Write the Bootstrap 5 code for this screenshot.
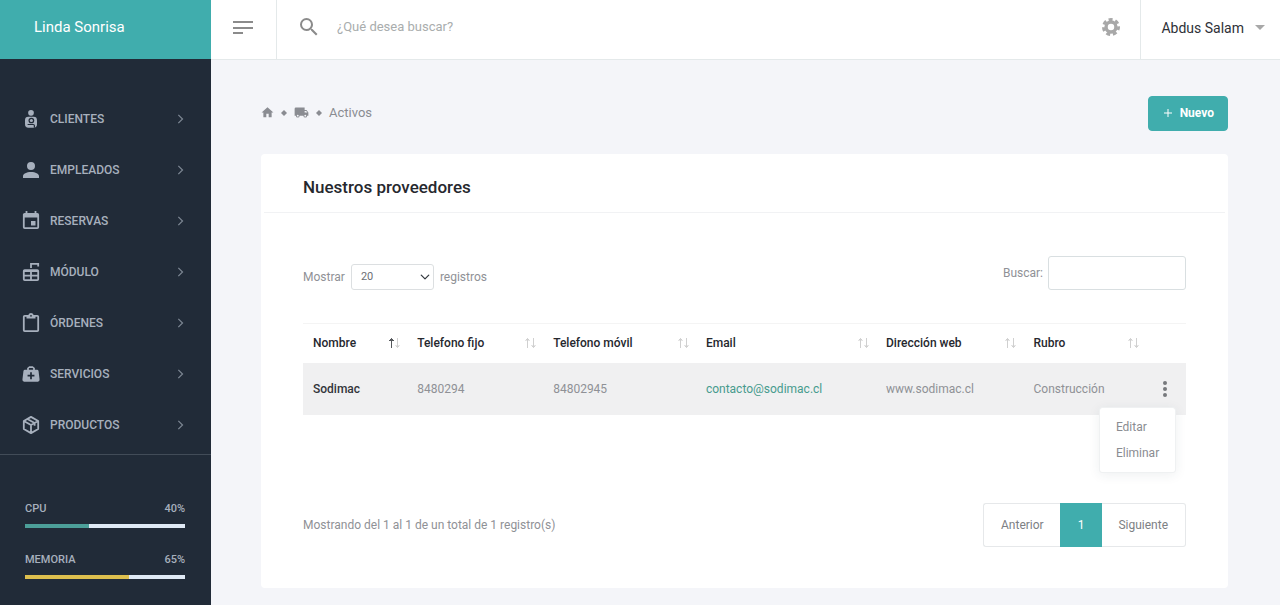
<!DOCTYPE html>
<html lang="es">
<head>
<meta charset="utf-8">
<meta name="viewport" content="width=device-width, initial-scale=1">
<title>Linda Sonrisa - Proveedores</title>
<link href="https://cdn.jsdelivr.net/npm/bootstrap@5.3.0/dist/css/bootstrap.min.css" rel="stylesheet">
<style>
  :root { --teal: #40adad; --ink: #212b38; --muted: #8f9196; --line: #e4e9ea; }
  body { font-family: Roboto, "Liberation Sans", sans-serif; font-size: 12px; line-height: 20px; color: var(--muted); background: #f4f5f9; }
  a { text-decoration: none; }
  svg { display: block; fill: currentColor; }
  .side-panel { width: 211px; background: var(--ink); color: #a7b0bd; }
  .brand-bar { height: 59px; padding: 0 34px 5px; background: var(--teal); color: #fff; font-size: 15px; }
  .side-menu { padding: 34px 0 4px; border-bottom: 1px solid #424c58; }
  .side-menu .nav-link { height: 51px; padding: 0 25px 0 22px; gap: 10px; color: #a7b0bd; font-size: 12px; font-weight: 500; }
  .side-menu .nav-link .arrow { color: #7c8692; }
  .usage { padding: 44px 26px 0 25px; font-size: 11px; font-weight: 500; }
  .usage .meter + .meter { margin-top: 22px; }
  .usage .progress { height: 4px; margin-top: 5px; border-radius: 0; background: #dfe9f5; }
  .usage .cpu { background: #4c9f99; }
  .usage .mem { background: #ddbf4e; }
  .top-bar { height: 60px; background: #fff; border-bottom: 1px solid var(--line); }
  .menu-btn { width: 66px; border: 0; border-right: 1px solid var(--line); background: none; color: #8b8b8b; padding: 0 0 4px 20px; }
  .search-box { padding: 0 20px 5px; color: #8b8b8b; }
  .search-box input { border: 0; padding: 0; font-size: 13px; color: var(--muted); box-shadow: none !important; }
  .search-box input::placeholder { color: #a9adad; }
  .gear-btn { border: 0; background: none; color: #a8a8a8; padding: 0 20px 5px; }
  .user-btn { border: 0; border-left: 1px solid var(--line); background: none; color: #2e3138; font-size: 14px; padding: 0 14px 4px 20px; gap: 10px; }
  .user-btn svg { color: #a8a8a8; }
  .page-body { padding: 36px 52px 17px 50px; }
  .crumbs { gap: 5px; color: #8a8c92; font-size: 13px; padding-bottom: 2px; }
  .crumbs a { color: inherit; }
  .new-btn { --bs-btn-bg: var(--teal); --bs-btn-border-color: var(--teal); --bs-btn-color: #fff; --bs-btn-hover-bg: #379a9a; --bs-btn-hover-color: #fff;
    font-size: 12px; font-weight: 700; line-height: 18px; padding: 7px 13px 8px; gap: 6px; border-radius: 4px; }
  .panel-card { margin-top: 23px; border: 0; border-radius: 4px; }
  .panel-card .card-header { margin: 0 3px; padding: 21px 39px 13px; border-bottom: 1px solid #f1f2f4; background: none; }
  .panel-card h1 { font-size: 17px; line-height: 24px; font-weight: 500; color: #26282e; margin: 0; }
  .panel-card .card-body { padding: 43px 42px 41px; }
  .len-row { padding-top: 8px; }
  .len-select { width: 83px; height: 26px; font-size: 11px; padding: 0 24px 0 9px; margin: 0 6px; border: 1px solid #dcdfe1; border-radius: 3px; color: #6d6f74;
    background-size: 10px; background-position: right 3px center; }
  .find-input { width: 138px; height: 34px; margin-left: 5px; border: 1px solid #d9dfe1; border-radius: 3px; }
  .data-grid { --bs-table-color: var(--muted); table-layout: fixed; margin: 33px 0 0; color: var(--muted); font-size: 12px; }
  .data-grid > :not(caption) > * > * { padding: 0 0 0 10px; vertical-align: middle; border: 0; white-space: nowrap; }
  .data-grid thead th { height: 39px; font-weight: 500; color: #26282e; border-top: 1px solid #f4f4f4; }
  .data-grid thead .sort { color: #d0d0d0; margin-right: 7px; }
  .data-grid thead .up { color: #55585c; }
  .data-grid tbody > tr > * { height: 52px; background: #f0f0f1; color: #8f9196; }
  .data-grid tbody th { font-weight: 500; color: #33353a; }
  .data-grid tbody a.mail { color: #479b8d; }
  .dots-btn { display: block; border: 0; background: none; color: #77797d; padding: 0; }
  .row-menu { min-width: 77px; padding: 6px 0; font-size: 12px; border: 1px solid #eff1f2; border-radius: 3px; box-shadow: 0 2px 12px rgba(40,60,80,.08); top: 100%; right: -2px; margin-top: 8px; }
  .row-menu .dropdown-item { padding: 3px 16px; color: #8a8c91; }
  .grid-foot { margin-top: 88px; }
  .pager { --bs-pagination-color: #7d8084; --bs-pagination-border-color: #e6e8ea; --bs-pagination-font-size: 12px; --bs-pagination-padding-x: 17px; --bs-pagination-padding-y: 11px;
    --bs-pagination-active-bg: var(--teal); --bs-pagination-active-border-color: var(--teal); --bs-pagination-border-radius: 3px; margin: 0; }
  .pager .page-item:first-child .page-link { border-right: 0; }
  .pager .page-item:last-child .page-link { border-left: 0; }
</style>
</head>
<body>
<div class="d-flex min-vh-100">
  <aside class="side-panel flex-shrink-0">
    <a href="#" class="brand-bar d-flex align-items-center">Linda Sonrisa</a>
    <nav class="side-menu nav flex-column">
      <a class="nav-link d-flex align-items-center" href="#">
        <svg width="18" height="18" viewBox="0 0 24 24"><circle cx="12" cy="3.800" r="3.800"/><path d="M8.500 9h7q4.500 0 4.500 4.500v5q0 5-4.500 5h-7q-4.500 0-4.500-5v-5Q4 9 8.500 9z"/><circle cx="12.500" cy="14" r="3.800" fill="#212b38"/><circle cx="12.500" cy="14" r="2.100"/><path d="M7.500 19.300h7.500q1.500 0 1.500 1.500v3" fill="none" stroke="#212b38" stroke-width="1.600"/></svg>
        <span class="flex-grow-1">CLIENTES</span><svg class="arrow" width="12" height="10" viewBox="0 0 12 12"><path d="M4 1l5 5-5 5" fill="none" stroke="currentColor" stroke-width="1.500"/></svg></a>
      <a class="nav-link d-flex align-items-center" href="#">
        <svg width="18" height="18" viewBox="3 3 18 18"><path d="M12 4a4 4 0 1 1 0 8 4 4 0 0 1 0-8m0 10c4.420 0 8 1.790 8 4v2H4v-2c0-2.210 3.580-4 8-4z"/></svg>
        <span class="flex-grow-1">EMPLEADOS</span><svg class="arrow" width="12" height="10" viewBox="0 0 12 12"><path d="M4 1l5 5-5 5" fill="none" stroke="currentColor" stroke-width="1.500"/></svg></a>
      <a class="nav-link d-flex align-items-center" href="#">
        <svg width="18" height="20" viewBox="2 1 20 22"><path d="M19 19H5V8h14m-3-7v2H8V1H6v2H5c-1.110 0-2 .89-2 2v14a2 2 0 0 0 2 2h14a2 2 0 0 0 2-2V5a2 2 0 0 0-2-2h-1V1m-1 11h-5v5h5v-5z"/></svg>
        <span class="flex-grow-1">RESERVAS</span><svg class="arrow" width="12" height="10" viewBox="0 0 12 12"><path d="M4 1l5 5-5 5" fill="none" stroke="currentColor" stroke-width="1.500"/></svg></a>
      <a class="nav-link d-flex align-items-center" href="#">
        <svg width="18" height="18" viewBox="2 2 20 20"><path fill-rule="evenodd" d="M5 9h14q2 0 2 2v9q0 2-2 2H5q-2 0-2-2v-9q0-2 2-2zm0 3v3h6v-3zm8 0v3h6v-3zm-8 5v3h6v-3zm8 0v3h6v-3zM11 2h10v4h-2V4h-6v3.500h-2z"/></svg>
        <span class="flex-grow-1">MÓDULO</span><svg class="arrow" width="12" height="10" viewBox="0 0 12 12"><path d="M4 1l5 5-5 5" fill="none" stroke="currentColor" stroke-width="1.500"/></svg></a>
      <a class="nav-link d-flex align-items-center" href="#">
        <svg width="18" height="20" viewBox="2 1 20 22"><path d="M19 3h-4.180C14.400 1.840 13.300 1 12 1s-2.400.84-2.820 2H5a2 2 0 0 0-2 2v15a2 2 0 0 0 2 2h14a2 2 0 0 0 2-2V5a2 2 0 0 0-2-2m-7 0a1 1 0 1 1 0 2 1 1 0 0 1 0-2M7 7h10V5h2v15H5V5h2v2z"/></svg>
        <span class="flex-grow-1">ÓRDENES</span><svg class="arrow" width="12" height="10" viewBox="0 0 12 12"><path d="M4 1l5 5-5 5" fill="none" stroke="currentColor" stroke-width="1.500"/></svg></a>
      <a class="nav-link d-flex align-items-center" href="#">
        <svg width="18" height="18" viewBox="1.500 2 21 20"><path fill-rule="evenodd" d="M10 3h4l2.500 2v2H19q1.500 0 1.800 1.500l1.200 10q.2 2.500-2 2.500H4q-2.200 0-2-2.500l1.200-10Q3.500 7 5 7h2.500V5zm.2 2-.7.600V7h5V5.600l-.7-.6zM11 10v3H8v2h3v3h2v-3h3v-2h-3v-3z"/></svg>
        <span class="flex-grow-1">SERVICIOS</span><svg class="arrow" width="12" height="10" viewBox="0 0 12 12"><path d="M4 1l5 5-5 5" fill="none" stroke="currentColor" stroke-width="1.500"/></svg></a>
      <a class="nav-link d-flex align-items-center" href="#">
        <svg width="18" height="18" viewBox="2 2 20 20"><path d="M12 3l8 4.500v9L12 21l-8-4.500v-9zM4 7.500l8 4.500 8-4.500M12 12v9M8 5.300l8 4.400v3" fill="none" stroke="currentColor" stroke-width="2" stroke-linejoin="round"/></svg>
        <span class="flex-grow-1">PRODUCTOS</span><svg class="arrow" width="12" height="10" viewBox="0 0 12 12"><path d="M4 1l5 5-5 5" fill="none" stroke="currentColor" stroke-width="1.500"/></svg></a>
    </nav>
    <section class="usage">
      <div class="meter">
        <div class="d-flex justify-content-between"><span>CPU</span><span>40%</span></div>
        <div class="progress" role="progressbar" aria-label="CPU" aria-valuenow="40" aria-valuemin="0" aria-valuemax="100"><div class="progress-bar cpu" style="width:40%"></div></div>
      </div>
      <div class="meter">
        <div class="d-flex justify-content-between"><span>MEMORIA</span><span>65%</span></div>
        <div class="progress" role="progressbar" aria-label="Memoria" aria-valuenow="65" aria-valuemin="0" aria-valuemax="100"><div class="progress-bar mem" style="width:65%"></div></div>
      </div>
    </section>
  </aside>

  <div class="flex-grow-1">
    <header class="top-bar d-flex align-items-stretch">
      <button type="button" class="menu-btn d-flex align-items-center" aria-label="Menú"><svg width="24" height="16" viewBox="0 0 24 16"><path d="M2 1h20v2H2zm0 6h20v2H2zm0 5h10v2H2z"/></svg></button>
      <form class="search-box d-flex align-items-center flex-grow-1" role="search">
        <label for="site-search" aria-label="Buscar"><svg width="24" height="24" viewBox="0 0 24 24"><path d="M9.500 3A6.500 6.500 0 0 1 16 9.500c0 1.610-.59 3.090-1.560 4.230l.27.27h.79l5 5-1.500 1.500-5-5v-.79l-.27-.27A6.520 6.520 0 0 1 9.500 16a6.500 6.500 0 1 1 0-13m0 2a4.500 4.500 0 1 0 0 9 4.500 4.500 0 0 0 0-9z"/></svg></label>
        <input id="site-search" type="search" class="form-control ms-3" placeholder="¿Qué desea buscar?">
      </form>
      <button type="button" class="gear-btn d-flex align-items-center" aria-label="Configuración"><svg width="18" height="18" viewBox="2 2 20 20"><g fill="none" stroke="currentColor"><circle cx="12" cy="12" r="5.500" stroke-width="3.800"/><circle cx="12" cy="12" r="8.400" stroke-width="3.200" stroke-dasharray="4.400 3.140" stroke-dashoffset="1"/></g></svg></button>
      <button type="button" class="user-btn d-flex align-items-center"><span>Abdus Salam</span><svg width="12" height="6" viewBox="0 0 12 6"><path d="M1 0h10L6 5z"/></svg></button>
    </header>

    <main class="page-body">
      <div class="d-flex justify-content-between align-items-center">
        <nav class="crumbs d-flex align-items-center" aria-label="Ruta">
          <a href="#" aria-label="Inicio"><svg width="13" height="13" viewBox="1 1 22 22"><path d="M10 20v-6h4v6h5v-8h3L12 3 2 12h3v8z"/></svg></a>
          <svg width="10" height="10" viewBox="0 0 10 10"><path d="M5 2l3 3-3 3-3-3z"/></svg>
          <a href="#" aria-label="Proveedores"><svg width="15" height="13" viewBox="0 2 24 20"><path d="M18 18.500a1.500 1.500 0 1 1 0-3 1.500 1.500 0 0 1 0 3m1.500-9 1.960 2.500H17V9.500M6 18.500a1.500 1.500 0 1 1 0-3 1.500 1.500 0 0 1 0 3M20 8h-3V4H3a2 2 0 0 0-2 2v11h2a3 3 0 0 0 6 0h6a3 3 0 0 0 6 0h2v-5z"/></svg></a>
          <svg width="10" height="10" viewBox="0 0 10 10"><path d="M5 2l3 3-3 3-3-3z"/></svg>
          <span>Activos</span>
        </nav>
        <button type="button" class="btn new-btn d-flex align-items-center"><svg width="12" height="12" viewBox="0 0 12 12"><path d="M2 6h8M6 2v8" stroke="currentColor"/></svg>Nuevo</button>
      </div>

      <section class="card panel-card">
        <div class="card-header"><h1>Nuestros proveedores</h1></div>
        <div class="card-body">
          <div class="d-flex justify-content-between align-items-start">
            <div class="d-flex align-items-center len-row"><label for="len">Mostrar</label>
              <select id="len" class="form-select len-select"><option>10</option><option selected>20</option><option>50</option></select><span>registros</span></div>
            <div class="d-flex align-items-center find-row"><label for="find">Buscar:</label><input id="find" type="search" class="form-control find-input"></div>
          </div>

          <table class="table data-grid">
            <colgroup><col style="width:11.8%"><col style="width:15.4%"><col style="width:17.3%"><col style="width:20.400%"><col style="width:16.7%"><col style="width:13.9%"><col></colgroup>
            <thead><tr>
              <th scope="col"><div class="d-flex justify-content-between align-items-center">Nombre<svg class="sort" width="12" height="12" viewBox="0 0 12 12" fill="none" stroke="currentColor"><path class="up" d="M3.500 11V1.500M1 4l2.500-2.500L6 4"/><path d="M9.500 1v9.500M7.500 8.500l2 2 2-2"/></svg></div></th>
              <th scope="col"><div class="d-flex justify-content-between align-items-center">Telefono fijo<svg class="sort" width="12" height="12" viewBox="0 0 12 12" fill="none" stroke="currentColor"><path d="M3.500 11V1.500M1.500 3.500l2-2 2 2M9.500 1v9.500M7.500 8.500l2 2 2-2"/></svg></div></th>
              <th scope="col"><div class="d-flex justify-content-between align-items-center">Telefono móvil<svg class="sort" width="12" height="12" viewBox="0 0 12 12" fill="none" stroke="currentColor"><path d="M3.500 11V1.500M1.500 3.500l2-2 2 2M9.500 1v9.500M7.500 8.500l2 2 2-2"/></svg></div></th>
              <th scope="col"><div class="d-flex justify-content-between align-items-center">Email<svg class="sort" width="12" height="12" viewBox="0 0 12 12" fill="none" stroke="currentColor"><path d="M3.500 11V1.500M1.500 3.500l2-2 2 2M9.500 1v9.500M7.500 8.500l2 2 2-2"/></svg></div></th>
              <th scope="col"><div class="d-flex justify-content-between align-items-center">Dirección web<svg class="sort" width="12" height="12" viewBox="0 0 12 12" fill="none" stroke="currentColor"><path d="M3.500 11V1.500M1.500 3.500l2-2 2 2M9.500 1v9.500M7.500 8.500l2 2 2-2"/></svg></div></th>
              <th scope="col"><div class="d-flex justify-content-between align-items-center">Rubro<svg class="sort" width="12" height="12" viewBox="0 0 12 12" fill="none" stroke="currentColor"><path d="M3.500 11V1.500M1.500 3.500l2-2 2 2M9.500 1v9.500M7.500 8.500l2 2 2-2"/></svg></div></th>
              <th scope="col" aria-label="Acciones"></th>
            </tr></thead>
            <tbody><tr>
              <th scope="row">Sodimac</th><td>8480294</td><td>84802945</td><td><a class="mail" href="mailto:contacto@sodimac.cl">contacto@sodimac.cl</a></td><td>www.sodimac.cl</td><td>Construcción</td>
              <td><div class="dropdown d-flex"><div class="position-relative">
                <button type="button" class="dots-btn" aria-label="Opciones"><svg width="18" height="20" viewBox="0 0 18 20"><circle cx="9" cy="4" r="2"/><circle cx="9" cy="10" r="2"/><circle cx="9" cy="16" r="2"/></svg></button>
                <div class="dropdown-menu row-menu show"><a class="dropdown-item" href="#">Editar</a><a class="dropdown-item" href="#">Eliminar</a></div>
              </div></div></td>
            </tr></tbody>
          </table>

          <div class="grid-foot d-flex justify-content-between align-items-center">
            <span class="summary">Mostrando del 1 al 1 de un total de 1 registro(s)</span>
            <nav aria-label="Páginas"><ul class="pagination pager">
              <li class="page-item"><a class="page-link" href="#">Anterior</a></li>
              <li class="page-item active"><a class="page-link" href="#">1</a></li>
              <li class="page-item"><a class="page-link" href="#">Siguiente</a></li>
            </ul></nav>
          </div>
        </div>
      </section>
    </main>
  </div>
</div>
<script src="https://cdn.jsdelivr.net/npm/bootstrap@5.3.0/dist/js/bootstrap.bundle.min.js"></script>
</body>
</html>
